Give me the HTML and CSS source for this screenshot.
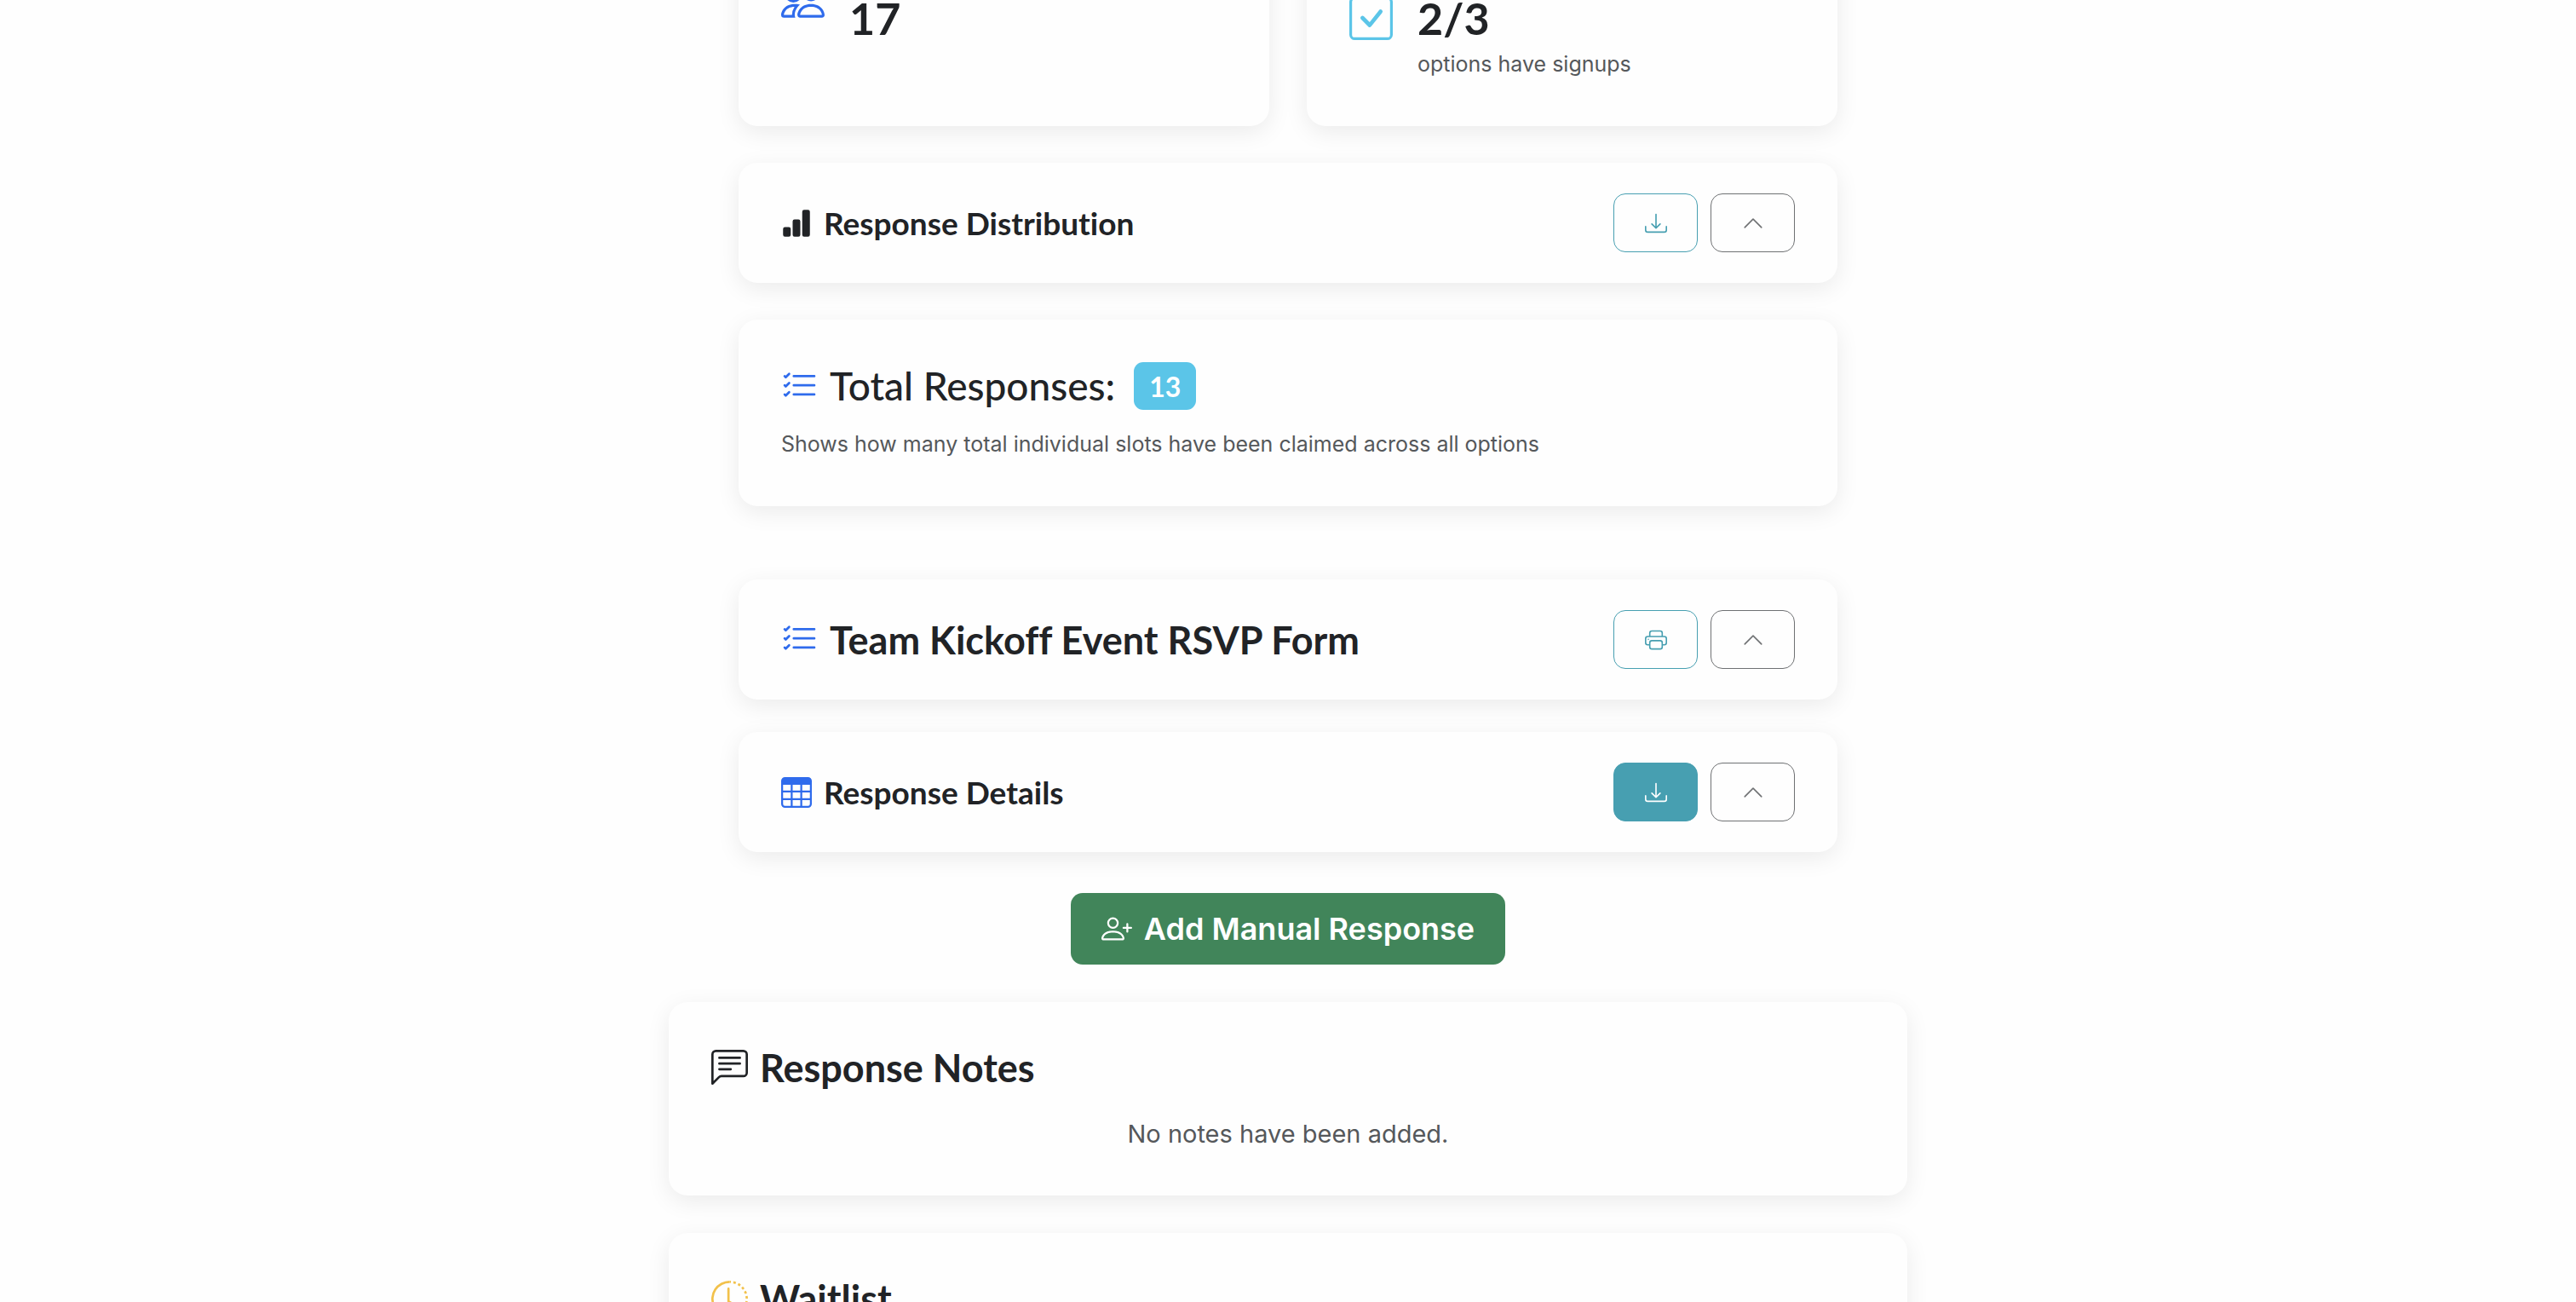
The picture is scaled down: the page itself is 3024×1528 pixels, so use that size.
FILE: index.html
```html
<!DOCTYPE html>
<html lang="en">
<head>
<meta charset="utf-8">
<title>Team Kickoff Event RSVP Form</title>
<link rel="stylesheet" href="styles.css">
</head>
<body>
<svg class="sprite" aria-hidden="true">
  <symbol id="people" viewBox="0 0 16 16"><path d="M15 14s1 0 1-1-1-4-5-4-5 3-5 4 1 1 1 1zm-7.978-1L7 12.996c.001-.264.167-1.03.76-1.72C8.312 10.629 9.282 10 11 10c1.717 0 2.687.63 3.24 1.276.593.69.758 1.457.76 1.72l-.008.002-.014.002zM11 7a2 2 0 1 0 0-4 2 2 0 0 0 0 4m3-2a3 3 0 1 1-6 0 3 3 0 0 1 6 0M6.936 9.28a6 6 0 0 0-1.23-.247A7 7 0 0 0 5 9c-4 0-5 3-5 4q0 1 1 1h4.216A2.24 2.24 0 0 1 5 13c0-1.01.377-2.042 1.09-2.904.243-.294.526-.569.846-.816M4.92 10A5.5 5.5 0 0 0 4 13H1c0-.26.164-1.03.76-1.724.545-.636 1.492-1.256 3.16-1.275ZM1.5 5.5a3 3 0 1 1 6 0 3 3 0 0 1-6 0m3-2a2 2 0 1 0 0 4 2 2 0 0 0 0-4"/></symbol>
  <symbol id="check-square" viewBox="0 0 16 16"><path d="M14 1a1 1 0 0 1 1 1v12a1 1 0 0 1-1 1H2a1 1 0 0 1-1-1V2a1 1 0 0 1 1-1zM2 0a2 2 0 0 0-2 2v12a2 2 0 0 0 2 2h12a2 2 0 0 0 2-2V2a2 2 0 0 0-2-2z"/><path d="M10.97 4.97a.75.75 0 0 1 1.071 1.05l-3.992 4.99a.75.75 0 0 1-1.08.02L4.324 8.384a.75.75 0 1 1 1.06-1.06l2.094 2.093 3.473-4.425z"/></symbol>
  <symbol id="bars" viewBox="0 0 16 16"><path d="M1 11a1 1 0 0 1 1-1h2a1 1 0 0 1 1 1v3a1 1 0 0 1-1 1H2a1 1 0 0 1-1-1zm5-4a1 1 0 0 1 1-1h2a1 1 0 0 1 1 1v7a1 1 0 0 1-1 1H7a1 1 0 0 1-1-1zm5-5a1 1 0 0 1 1-1h2a1 1 0 0 1 1 1v12a1 1 0 0 1-1 1h-2a1 1 0 0 1-1-1z"/></symbol>
  <symbol id="download" viewBox="0 0 16 16"><path d="M.5 9.9a.5.5 0 0 1 .5.5v2.5a1 1 0 0 0 1 1h12a1 1 0 0 0 1-1v-2.5a.5.5 0 0 1 1 0v2.5a2 2 0 0 1-2 2H2a2 2 0 0 1-2-2v-2.5a.5.5 0 0 1 .5-.5"/><path d="M7.646 11.854a.5.5 0 0 0 .708 0l3-3a.5.5 0 0 0-.708-.708L8.5 10.293V1.5a.5.5 0 0 0-1 0v8.793L5.354 8.146a.5.5 0 1 0-.708.708z"/></symbol>
  <symbol id="chevron" viewBox="0 0 16 16"><path fill-rule="evenodd" d="M7.646 4.646a.5.5 0 0 1 .708 0l6 6a.5.5 0 0 1-.708.708L8 5.707l-5.646 5.647a.5.5 0 0 1-.708-.708z"/></symbol>
  <symbol id="list-check" viewBox="0 0 16 16"><path fill-rule="evenodd" d="M5 11.5a.5.5 0 0 1 .5-.5h9a.5.5 0 0 1 0 1h-9a.5.5 0 0 1-.5-.5m0-4a.5.5 0 0 1 .5-.5h9a.5.5 0 0 1 0 1h-9a.5.5 0 0 1-.5-.5m0-4a.5.5 0 0 1 .5-.5h9a.5.5 0 0 1 0 1h-9a.5.5 0 0 1-.5-.5M3.854 2.146a.5.5 0 0 1 0 .708l-1.5 1.5a.5.5 0 0 1-.708 0l-.5-.5a.5.5 0 1 1 .708-.708L2 3.293l1.146-1.147a.5.5 0 0 1 .708 0m0 4a.5.5 0 0 1 0 .708l-1.5 1.5a.5.5 0 0 1-.708 0l-.5-.5a.5.5 0 1 1 .708-.708L2 7.293l1.146-1.147a.5.5 0 0 1 .708 0m0 4a.5.5 0 0 1 0 .708l-1.5 1.5a.5.5 0 0 1-.708 0l-.5-.5a.5.5 0 0 1 .708-.708l.146.147 1.146-1.147a.5.5 0 0 1 .708 0"/></symbol>
  <symbol id="printer" viewBox="0 0 16 16"><path d="M2.5 8a.5.5 0 1 0 0-1 .5.5 0 0 0 0 1"/><path d="M5 1a2 2 0 0 0-2 2v2H2a2 2 0 0 0-2 2v3a2 2 0 0 0 2 2h1v1a2 2 0 0 0 2 2h6a2 2 0 0 0 2-2v-1h1a2 2 0 0 0 2-2V7a2 2 0 0 0-2-2h-1V3a2 2 0 0 0-2-2zM4 3a1 1 0 0 1 1-1h6a1 1 0 0 1 1 1v2H4zm1 5a2 2 0 0 0-2 2v1H2a1 1 0 0 1-1-1V7a1 1 0 0 1 1-1h12a1 1 0 0 1 1 1v3a1 1 0 0 1-1 1h-1v-1a2 2 0 0 0-2-2zm7 2v3a1 1 0 0 1-1 1H5a1 1 0 0 1-1-1v-3a1 1 0 0 1 1-1h6a1 1 0 0 1 1 1"/></symbol>
  <symbol id="table" viewBox="0 0 16 16"><path d="M0 2a2 2 0 0 1 2-2h12a2 2 0 0 1 2 2v12a2 2 0 0 1-2 2H2a2 2 0 0 1-2-2zm15 2h-4v3h4zm0 4h-4v3h4zm0 4h-4v3h3a1 1 0 0 0 1-1zm-5 3v-3H6v3zm-5 0v-3H1v2a1 1 0 0 0 1 1zm-4-4h4V8H1zm0-4h4V4H1zm5-3v3h4V4zm4 4H6v3h4z"/></symbol>
  <symbol id="person-plus" viewBox="0 0 16 16"><path d="M6 8a3 3 0 1 0 0-6 3 3 0 0 0 0 6m2-3a2 2 0 1 1-4 0 2 2 0 0 1 4 0m4 8c0 1-1 1-1 1H1s-1 0-1-1 1-4 6-4 6 3 6 4m-1-.004c-.001-.246-.154-.986-.832-1.664C9.516 10.68 8.289 10 6 10s-3.516.68-4.168 1.332c-.678.678-.83 1.418-.832 1.664z"/><path fill-rule="evenodd" d="M13.5 5a.5.5 0 0 1 .5.5V7h1.5a.5.5 0 0 1 0 1H14v1.5a.5.5 0 0 1-1 0V8h-1.5a.5.5 0 0 1 0-1H13V5.5a.5.5 0 0 1 .5-.5"/></symbol>
  <symbol id="chat" viewBox="0 0 16 16"><path d="M14 1a1 1 0 0 1 1 1v8a1 1 0 0 1-1 1H4.414A2 2 0 0 0 3 11.586l-2 2V2a1 1 0 0 1 1-1zM2 0a2 2 0 0 0-2 2v12.793a.5.5 0 0 0 .854.353l2.853-2.853A1 1 0 0 1 4.414 12H14a2 2 0 0 0 2-2V2a2 2 0 0 0-2-2z"/><path d="M3 3.5a.5.5 0 0 1 .5-.5h9a.5.5 0 0 1 0 1h-9a.5.5 0 0 1-.5-.5M3 6a.5.5 0 0 1 .5-.5h9a.5.5 0 0 1 0 1h-9A.5.5 0 0 1 3 6m0 2.5a.5.5 0 0 1 .5-.5h5a.5.5 0 0 1 0 1h-5a.5.5 0 0 1-.5-.5"/></symbol>
  <symbol id="clock" viewBox="0 0 16 16"><path d="M8.515 1.019A7 7 0 0 0 8 1V0a8 8 0 0 1 .589.022zm2.004.45a7 7 0 0 0-.985-.299l.219-.976q.576.129 1.126.342zm1.37.71a7 7 0 0 0-.439-.27l.493-.87a8 8 0 0 1 .979.654l-.615.789a7 7 0 0 0-.418-.302zm1.834 1.79a7 7 0 0 0-.653-.796l.724-.69q.406.429.747.91zm.744 1.352a7 7 0 0 0-.214-.468l.893-.45a8 8 0 0 1 .45 1.088l-.95.313a7 7 0 0 0-.179-.483m.53 2.507a7 7 0 0 0-.1-1.025l.985-.17q.1.58.116 1.17zm-.131 1.538q.05-.254.081-.51l.993.123a8 8 0 0 1-.23 1.155l-.964-.267q.069-.247.12-.501m-.952 2.379q.276-.436.486-.908l.914.405q-.24.54-.555 1.038zm-.964 1.205q.183-.183.35-.378l.758.653a8 8 0 0 1-.401.432z"/><path d="M8 1a7 7 0 1 0 4.95 11.95l.707.707A8.001 8.001 0 1 1 8 0z"/><path d="M7.5 3a.5.5 0 0 1 .5.5v5.21l3.248 1.856a.5.5 0 0 1-.496.868l-3.5-2A.5.5 0 0 1 7 9V3.5a.5.5 0 0 1 .5-.5"/></symbol>
</svg>
<main class="page">
  <div class="column">
    <section class="stats">
      <div class="card stat">
        <svg class="icon icon-xl blue"><use href="#people"/></svg>
        <div class="stat-body"><p class="stat-value">17</p></div>
      </div>
      <div class="card stat">
        <svg class="icon icon-xl cyan"><use href="#check-square"/></svg>
        <div class="stat-body"><p class="stat-value">2/3</p><p class="small">options have signups</p></div>
      </div>
    </section>

    <section class="card bar">
      <h3 class="title"><svg class="icon icon-md"><use href="#bars"/></svg>Response Distribution</h3>
      <div class="actions">
        <button class="btn teal" type="button" aria-label="Download chart"><svg class="icon icon-sm"><use href="#download"/></svg></button>
        <button class="btn gray" type="button" aria-label="Collapse"><svg class="icon icon-sm"><use href="#chevron"/></svg></button>
      </div>
    </section>

    <section class="card total">
      <h2 class="title title-lg regular"><svg class="icon icon-lg blue"><use href="#list-check"/></svg>Total Responses: <span class="badge">13</span></h2>
      <p class="small">Shows how many total individual slots have been claimed across all options</p>
    </section>

    <section class="card bar form-bar">
      <h2 class="title title-lg"><svg class="icon icon-lg blue"><use href="#list-check"/></svg>Team Kickoff Event RSVP Form</h2>
      <div class="actions">
        <button class="btn teal" type="button" aria-label="Print"><svg class="icon icon-sm"><use href="#printer"/></svg></button>
        <button class="btn gray" type="button" aria-label="Collapse"><svg class="icon icon-sm"><use href="#chevron"/></svg></button>
      </div>
    </section>

    <section class="card bar">
      <h3 class="title"><svg class="icon icon-md blue"><use href="#table"/></svg>Response Details</h3>
      <div class="actions">
        <button class="btn teal solid" type="button" aria-label="Download responses"><svg class="icon icon-sm"><use href="#download"/></svg></button>
        <button class="btn gray" type="button" aria-label="Collapse"><svg class="icon icon-sm"><use href="#chevron"/></svg></button>
      </div>
    </section>

    <button class="add" type="button"><svg class="icon icon-md"><use href="#person-plus"/></svg>Add Manual Response</button>
  </div>

  <section class="card notes">
    <h2 class="title title-lg"><svg class="icon icon-lg"><use href="#chat"/></svg>Response Notes</h2>
    <p class="empty">No notes have been added.</p>
  </section>

  <section class="card notes">
    <h2 class="title title-lg"><svg class="icon icon-lg yellow"><use href="#clock"/></svg>Waitlist</h2>
  </section>
</main>
</body>
</html>
```
FILE: styles.css
```css
*, *::before, *::after { box-sizing: border-box; }

body {
  margin: 0;
  background: #fefefe;
  color: #212326;
  font-family: Inter, "Liberation Sans", sans-serif;
}

h2, h3, p { margin: 0; }

.sprite { display: none; }

.page {
  display: flex;
  flex-direction: column;
  gap: 44px;
  max-width: 1454px;
  margin: -105px auto 0;
}

.column {
  display: flex;
  flex-direction: column;
  width: 100%;
  max-width: 1290px;
  margin: 0 auto;
}

.card {
  padding: 50px;
  border-radius: 22px;
  background: #fefefe;
  box-shadow: 0 7px 28px rgba(0, 0, 0, 0.08);
}

.icon { flex: none; fill: currentColor; }
.icon-sm { width: 26px; height: 26px; }
.icon-md { width: 36px; height: 36px; }
.icon-lg { width: 43px; height: 43px; }
.icon-xl { width: 51px; height: 51px; }

.blue { color: #2f6bec; }
.cyan { color: #5bc5e8; }
.yellow { color: #f2c14b; }

.stats {
  display: grid;
  grid-template-columns: 1fr 1fr;
  align-items: stretch;
  gap: 44px;
  margin-bottom: 43px;
}

.stat { display: flex; align-items: flex-start; gap: 29px; }
.stat .icon { margin-top: 31px; }
.stat .cyan { margin-top: 51px; }
.stat-body { padding-top: 40px; }

.stat-value {
  font-family: Lato, sans-serif;
  font-size: 52px;
  font-weight: 700;
  line-height: 72px;
}

.small {
  margin-bottom: 5px;
  font-size: 25px;
  line-height: 36px;
  color: #55585b;
}

.bar {
  display: flex;
  align-items: center;
  justify-content: space-between;
  padding: 36px 50px;
  margin-bottom: 43px;
}

.title {
  display: flex;
  align-items: center;
  gap: 14px;
  font-family: Lato, sans-serif;
  font-size: 37px;
  font-weight: 700;
  font-variant-ligatures: none;
  line-height: 44px;
}

.title-lg { font-size: 45px; line-height: 54px; }
.regular { font-size: 46px; font-weight: 500; }

.actions { display: flex; gap: 15px; }

.btn {
  display: flex;
  align-items: center;
  justify-content: center;
  width: 99px;
  height: 69px;
  padding: 0;
  border: 1px solid currentColor;
  border-radius: 14px;
  background: transparent;
}

.teal { color: #479fb1; }
.gray { color: #6f7173; }

.solid {
  border-color: #479fb1;
  background: #479fb1;
  color: #fff;
}

.total { margin-bottom: 86px; }
.total .small { margin-top: 22px; }

.badge {
  padding: 2px 18px 0;
  margin-left: 8px;
  border-radius: 11px;
  background: #5bc5e8;
  color: #fff;
  font-size: 32px;
  font-weight: 700;
}

.form-bar { margin-bottom: 38px; }

.add {
  display: flex;
  align-items: center;
  align-self: center;
  gap: 14px;
  height: 84px;
  padding: 0 36px;
  margin-top: 5px;
  border: 0;
  border-radius: 14px;
  background: #41855a;
  color: #fff;
  font-family: inherit;
  font-size: 36px;
  font-weight: 600;
}

.empty {
  margin-top: 29px;
  font-size: 29px;
  line-height: 44px;
  color: #55585b;
  text-align: center;
}
```
